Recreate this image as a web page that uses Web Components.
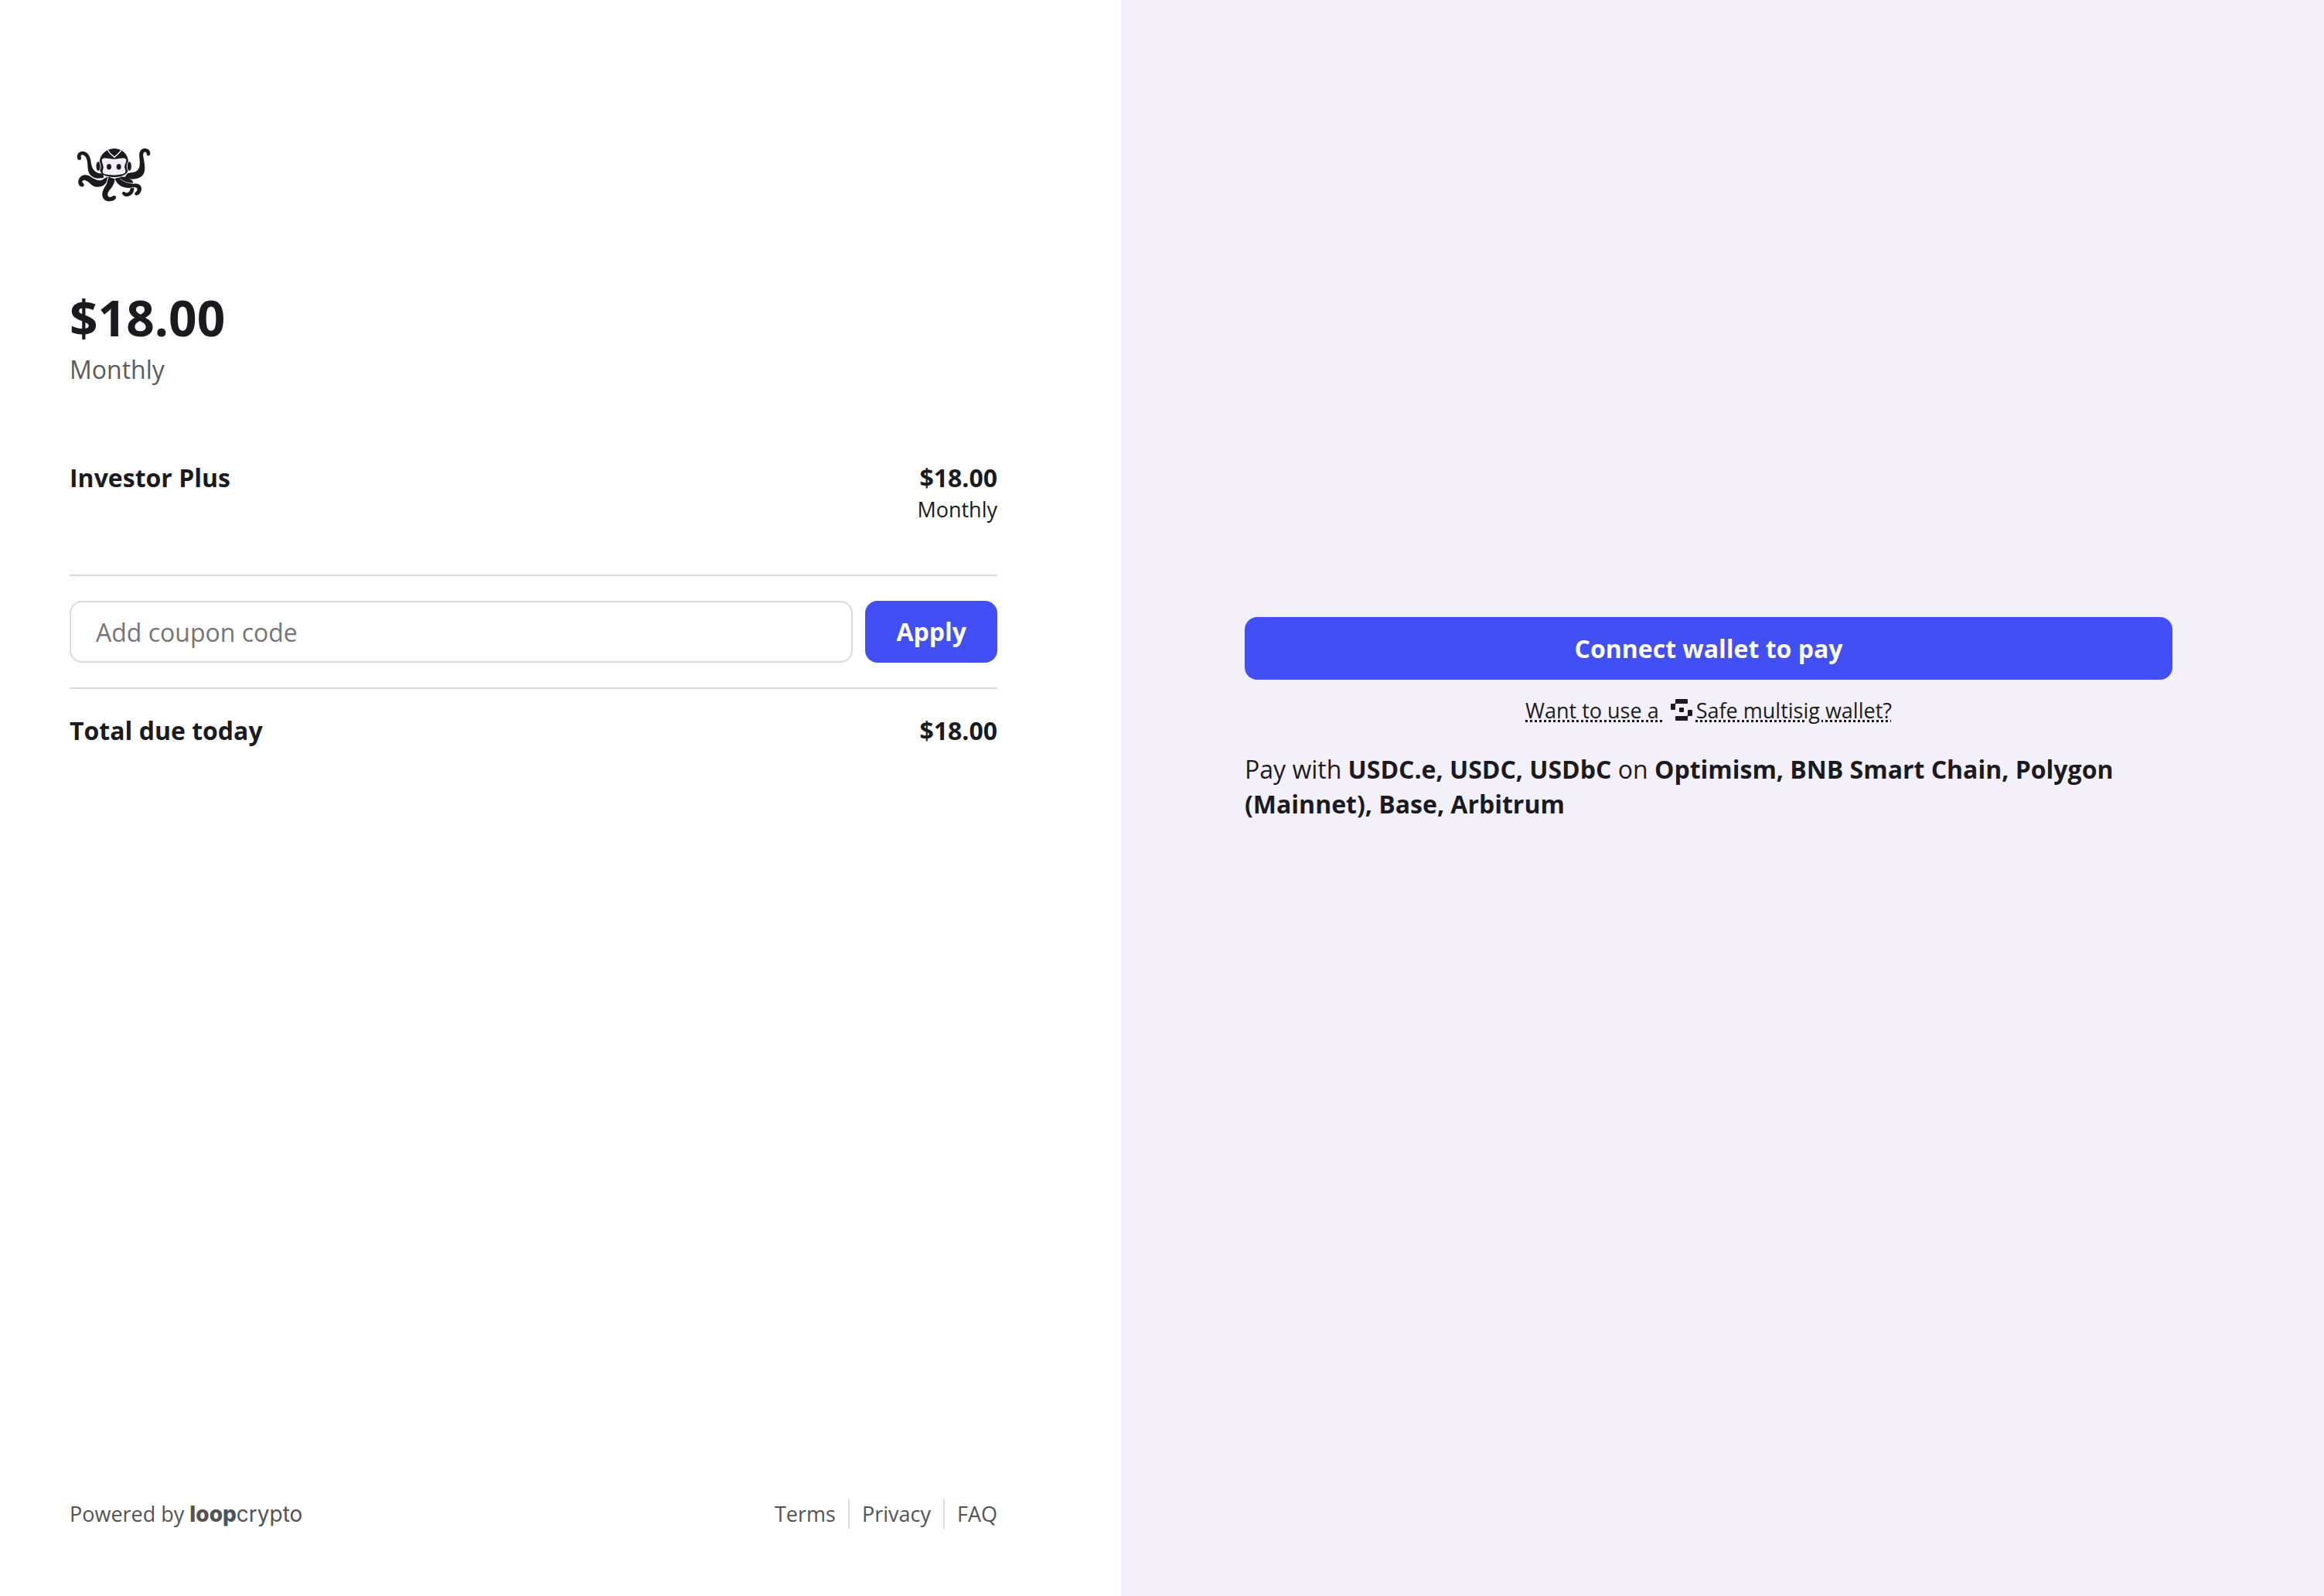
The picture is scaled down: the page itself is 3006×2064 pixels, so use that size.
<!DOCTYPE html>
<html lang="en">
<head>
<meta charset="utf-8">
<meta name="viewport" content="width=device-width, initial-scale=1">
<title>Checkout</title>
<style>
  body {
    margin: 0;
    font-family: "Open Sans", "Noto Sans", sans-serif;
    font-size: 32px;
    line-height: 44px;
    color: #1b1b1f;
  }
</style>
</head>
<body>
<checkout-page>
  <brand-logo slot="summary"></brand-logo>
  <price-heading slot="summary" amount="$18.00" period="Monthly"></price-heading>
  <line-item slot="summary" name="Investor Plus" amount="$18.00" period="Monthly"></line-item>
  <coupon-form slot="summary"></coupon-form>
  <line-item slot="summary" name="Total due today" amount="$18.00"></line-item>
  <page-footer slot="footer">
    <a href="#terms">Terms</a>
    <a href="#privacy">Privacy</a>
    <a href="#faq">FAQ</a>
  </page-footer>
  <wallet-panel slot="payment">
    Pay with <b>USDC.e, USDC, USDbC</b> on <b>Optimism, BNB Smart Chain, Polygon (Mainnet), Base, Arbitrum</b>
  </wallet-panel>
</checkout-page>

<script>
const define = (name, html, setup) => {
  const template = document.createElement("template");
  template.innerHTML = html;

  window.customElements.define(name, class extends HTMLElement {
    constructor() {
      super();
      this.attachShadow({ mode: "open" });
      this.shadowRoot.appendChild(template.content.cloneNode(true));
    }

    connectedCallback() {
      if (setup) setup(this, this.shadowRoot);
    }
  });
};

const fill = (host, root, names) => {
  names.forEach((name) => {
    const el = root.querySelector("." + name);
    el.textContent = host.getAttribute(name) || "";
    el.hidden = !host.hasAttribute(name);
  });
};

define("checkout-page", `
  <style>
    :host {
      display: grid;
      grid-template-columns: 1450fr 1556fr;
      min-height: 100vh;
    }

    .summary {
      box-sizing: border-box;
      display: flex;
      flex-direction: column;
      padding: 170px 160px 87px 90px;
      background: #fff;
    }

    .payment {
      padding: 798px 196px 88px 160px;
      background: #f3f0fa;
    }

    footer {
      margin-top: auto;
    }
  </style>
  <main class="summary">
    <slot name="summary"></slot>
    <footer><slot name="footer"></slot></footer>
  </main>
  <section class="payment"><slot name="payment"></slot></section>
`);

define("brand-logo", `
  <style>
    :host {
      display: block;
      margin-bottom: 88px;
    }

    svg {
      display: block;
      width: 120px;
      height: 110px;
    }
  </style>
  <svg viewBox="30 0 360 330" role="img" aria-label="Octopus logo">
    <g fill="#1b1b1f">
      <path d="M60 104C57 88 67 77 80 77C98 77 109 93 112 112C114 132 119 151 137 160C146 165 153 162 160 164L163 178C150 187 128 184 115 173C101 161 101 146 100 128C99 108 92 92 80 91C73 91 73 96 75 103C77 112 63 114 60 104Z"/>
      <path d="M343 86C344 73 332 65 319 66C303 68 299 84 301 100C303 122 305 143 291 153C280 161 266 159 255 162L244 178C262 188 288 187 304 178C320 168 324 151 321 128C319 107 312 90 318 82C323 76 329 81 329 87C329 97 342 96 343 86Z"/>
      <path d="M82 214C69 218 62 202 64 192C67 176 80 168 94 169C113 171 125 189 145 190C158 190 166 180 177 176L181 190C170 208 151 218 132 215C113 212 103 190 87 189C78 190 77 196 83 201C88 206 87 212 82 214Z"/>
      <path d="M182 176L205 184C206 200 196 216 184 229C176 240 176 250 183 254C190 258 195 251 201 249C209 247 213 255 208 262C201 270 186 273 173 269C157 263 153 246 160 229C166 213 180 202 176 187Z"/>
      <path d="M205 183L232 176C246 185 257 203 277 203C294 201 309 206 309 222C309 235 300 247 290 248C281 248 281 238 287 235C295 230 295 218 284 217C274 216 268 221 249 218C225 215 212 200 205 183Z"/>
      <path d="M226 176C248 174 274 184 277 200L249 199Z"/>
      <path d="M266 220L280 219C281 236 271 251 252 252C242 252 234 245 234 239C235 231 244 234 249 238C258 240 266 231 266 220Z"/>
      <path d="M146 117C149 88 173 67 203 67C234 67 257 88 258 117C264 134 260 156 248 165C228 181 176 181 157 165C145 154 141 132 146 117Z"/>
    </g>
    <g fill="none" stroke="#fff" stroke-width="3" stroke-linecap="round">
      <path d="M104 166C117 181 134 187 151 182"/>
      <path d="M178 181C177 193 173 201 165 208"/>
      <path d="M226 183C237 193 249 199 265 200" stroke-width="2"/>
      <path d="M179 74L190 88L204 100L218 87L229 75" stroke-width="4"/>
    </g>
    <path fill="#1b1b1f" d="M187 72Q204 62 222 72L213 83L204 91L195 83Z"/>
    <path fill="#f3effa" d="M155 109C160 102 172 103 183 105Q203 109 222 105C234 103 246 102 250 109C251 119 243 129 243 139C245 148 251 155 243 163C225 171 181 171 163 164C153 156 162 146 161 137C160 127 154 119 155 109Z"/>
    <g fill="#1b1b1f">
      <ellipse cx="183" cy="137" rx="9" ry="11"/>
      <ellipse cx="221" cy="137" rx="9" ry="11"/>
      <ellipse cx="141" cy="135" rx="9" ry="19" stroke="#fff" stroke-width="3"/>
      <ellipse cx="262" cy="135" rx="9" ry="19" stroke="#fff" stroke-width="3"/>
    </g>
  </svg>
`);

define("price-heading", `
  <style>
    :host {
      display: block;
      margin-bottom: 94px;
    }

    h1 {
      margin: 0;
      font-size: 64px;
      line-height: 86px;
      font-weight: 700;
    }

    p {
      margin: 0;
      line-height: 48px;
      color: #5b5b5e;
    }
  </style>
  <h1 class="amount"></h1>
  <p class="period"></p>
`, (host, root) => fill(host, root, ["amount", "period"]));

define("line-item", `
  <style>
    :host {
      display: flex;
      justify-content: space-between;
      font-weight: 700;
    }

    .price {
      text-align: right;
    }

    .amount,
    .period {
      display: block;
    }

    .period {
      font-size: 27px;
      line-height: 38px;
      font-weight: 400;
    }

    [hidden] {
      display: none;
    }
  </style>
  <span class="name"></span>
  <span class="price">
    <span class="amount"></span>
    <span class="period"></span>
  </span>
`, (host, root) => fill(host, root, ["name", "amount", "period"]));

define("coupon-form", `
  <style>
    :host {
      display: block;
      margin: 65px 0 32px;
      padding: 32px 0;
      border: solid #dadadc;
      border-width: 2px 0;
    }

    form {
      display: flex;
      gap: 16px;
    }

    input {
      flex: 1;
      min-width: 0;
      box-sizing: border-box;
      height: 80px;
      padding: 0 32px;
      border: 2px solid #dadadc;
      border-radius: 16px;
      background: transparent;
      font: inherit;
      color: inherit;
    }

    input::placeholder {
      color: #757578;
      opacity: 1;
    }

    button {
      padding: 0 40px;
      border: none;
      border-radius: 16px;
      background: #424ff4;
      color: #fff;
      font: inherit;
      font-weight: 700;
      cursor: pointer;
    }
  </style>
  <form>
    <input type="text" name="coupon" aria-label="Add coupon code" placeholder="Add coupon code">
    <button type="submit">Apply</button>
  </form>
`, (host, root) => {
  root.querySelector("form").addEventListener("submit", (e) => e.preventDefault());
});

define("page-footer", `
  <style>
    :host {
      display: flex;
      justify-content: space-between;
      font-size: 27px;
      line-height: 38px;
      color: #535356;
    }

    .brand {
      font-family: Inter, sans-serif;
      font-size: 28px;
      color: inherit;
      text-decoration: none;
    }

    .brand b {
      font-weight: 800;
    }

    nav {
      display: flex;
    }

    ::slotted(a) {
      padding: 0 16px;
      border-left: 2px solid #dadadc;
      color: inherit;
      text-decoration: none;
    }

    ::slotted(a:first-child) {
      border-left: none;
    }

    ::slotted(a:last-child) {
      padding-right: 0;
    }
  </style>
  <span>Powered by <a class="brand" href="#loop"><b>loop</b>crypto</a></span>
  <nav aria-label="Legal"><slot></slot></nav>
`);

define("safe-icon", `
  <style>
    :host {
      display: inline-block;
      width: 28px;
      height: 28px;
    }

    svg {
      display: block;
      width: 100%;
      height: 100%;
    }
  </style>
  <svg viewBox="0 0 28 28" fill="currentColor" aria-hidden="true">
    <rect x="6" width="16" height="6" rx="1"/>
    <rect y="6" width="6" height="8" rx="1"/>
    <rect x="11" y="11" width="6" height="6" rx="1"/>
    <rect x="22" y="14" width="6" height="8" rx="1"/>
    <rect x="6" y="22" width="16" height="6" rx="1"/>
    <path d="M5 6L6 5L7 6L6 7ZM21 22L22 21L23 22L22 23Z"/>
  </svg>
`);

define("wallet-panel", `
  <style>
    :host {
      display: block;
    }

    button {
      display: block;
      width: 100%;
      height: 81px;
      border: none;
      border-radius: 16px;
      background: #424ff4;
      color: #fff;
      font: inherit;
      font-weight: 700;
      cursor: pointer;
    }

    .multisig {
      margin: 20px 0 33px;
      font-size: 27px;
      line-height: 40px;
      text-align: center;
    }

    .multisig a {
      color: inherit;
      text-decoration: none;
    }

    .multisig span {
      text-decoration: underline dotted 3px;
      white-space: pre;
    }

    safe-icon {
      margin: 0 5px 0 8px;
      vertical-align: -3px;
    }

    .networks {
      margin: 0;
      line-height: 45px;
    }
  </style>
  <button type="button">Connect wallet to pay</button>
  <p class="multisig"><a href="#safe"><span>Want to use a </span><safe-icon></safe-icon><span>Safe</span><span> multisig wallet?</span></a></p>
  <p class="networks"><slot></slot></p>
`);
</script>
</body>
</html>
